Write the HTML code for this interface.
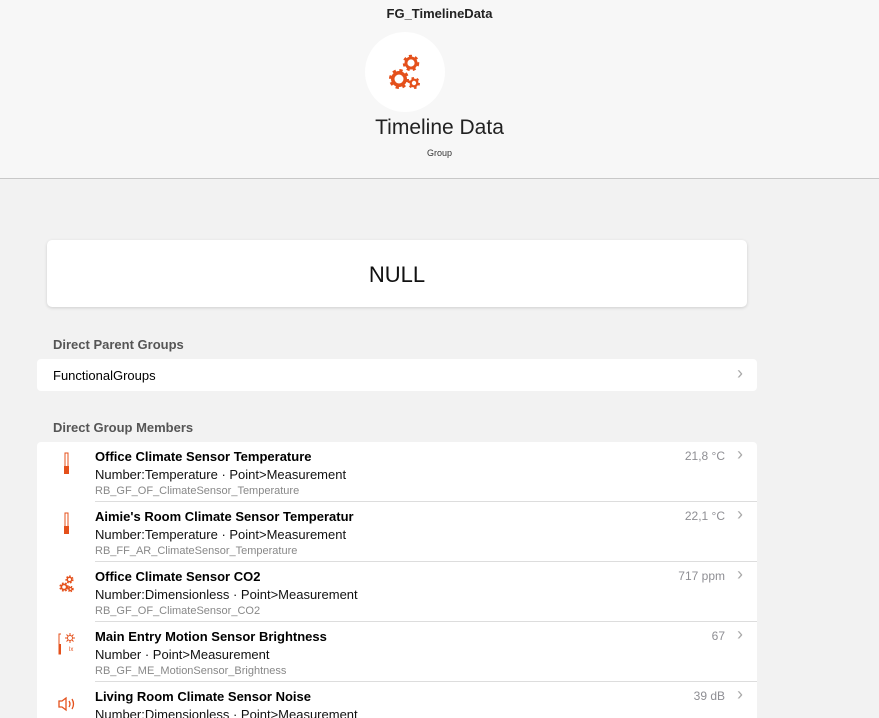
<!DOCTYPE html><html><head><style>
html,body{margin:0;width:879px;height:718px;overflow:hidden}
body{background:#f2f2f2;font-family:"Liberation Sans",sans-serif;color:#000;position:relative}
.hdr{height:178px;background:#f7f7f7;border-bottom:1px solid #c8c8c8;position:relative;text-align:center}
.t1{position:absolute;top:6px;left:0;right:0;font-size:13px;font-weight:bold;color:#222}
.circ{position:absolute;left:365px;top:32px;width:80px;height:80px;border-radius:50%;background:#fff}
.t2{position:absolute;top:116px;left:0;right:0;font-size:21px;color:#222}
.t3{position:absolute;top:148px;left:0;right:0;font-size:9px;color:#333}
.card{position:absolute;left:47px;top:240px;width:700px;height:67px;background:#fff;border-radius:5px;box-shadow:0 1px 3px rgba(0,0,0,.15);text-align:center;line-height:70px;font-size:22px;color:#111}
.sec{position:absolute;left:53px;font-size:13px;font-weight:bold;color:#555}
.list{position:absolute;left:37px;width:720px;background:#fff;border-radius:4px}
.row{position:relative;height:60px}
.row .ic{position:absolute;left:20px;top:10px}
.row .tx{position:absolute;left:58px;right:0;top:0;height:59px;border-bottom:1px solid #ddd}
.a{position:absolute;top:7px;font-size:13px;font-weight:bold}
.b{position:absolute;top:25px;font-size:13px;color:#111}
.c{position:absolute;top:43px;font-size:11px;color:#888}
.v{position:absolute;right:32px;top:7px;font-size:12px;color:#8e8e93}
.ch{position:absolute;right:14px;top:2px;font-size:18px;color:#aaa}
</style></head><body>
<div class="hdr"><div class="t1">FG_TimelineData</div><div class="circ">
<svg width="80" height="80" viewBox="0 0 80 80">
<g fill="#e4501b" stroke="#e4501b">
<circle cx="34" cy="47" r="8" stroke-width="4" stroke-dasharray="3 3.3"/>
<circle cx="46" cy="31" r="6.5" stroke-width="3.5" stroke-dasharray="2.8 2.9"/>
<circle cx="49" cy="51" r="4.5" stroke-width="3" stroke-dasharray="2.2 2.5"/>
</g>
<g fill="#fff"><circle cx="34" cy="47" r="4.5"/><circle cx="46" cy="31" r="3.6"/><circle cx="49" cy="51" r="2.2"/></g></svg></div>
<div class="t2">Timeline Data</div><div class="t3">Group</div></div>
<div class="card">NULL</div>
<div class="sec" style="top:337px">Direct Parent Groups</div>
<div class="list" style="top:359px;height:32px"><div style="position:absolute;left:16px;top:9px;font-size:13px">FunctionalGroups</div><div class="ch" style="top:4px">›</div></div>
<div class="sec" style="top:420px">Direct Group Members</div>
<div class="list" style="top:442px;height:300px">
<div class="row"><div class="ic"><svg width="20" height="24"><rect x="8" y="1" width="3" height="14" fill="none" stroke="#e4501b"/><rect x="7" y="14" width="5" height="8" fill="#e4501b"/></svg></div><div class="tx"><div class="a">Office Climate Sensor Temperature</div><div class="b">Number:Temperature · Point&gt;Measurement</div><div class="c">RB_GF_OF_ClimateSensor_Temperature</div><div class="v">21,8 °C</div><div class="ch">›</div></div></div>
<div class="row"><div class="ic"><svg width="20" height="24"><rect x="8" y="1" width="3" height="14" fill="none" stroke="#e4501b"/><rect x="7" y="14" width="5" height="8" fill="#e4501b"/></svg></div><div class="tx"><div class="a">Aimie's Room Climate Sensor Temperatur</div><div class="b">Number:Temperature · Point&gt;Measurement</div><div class="c">RB_FF_AR_ClimateSensor_Temperature</div><div class="v">22,1 °C</div><div class="ch">›</div></div></div>
<div class="row"><div class="ic"><svg width="22" height="24" viewBox="0 0 22 24"><g fill="#e4501b" stroke="#e4501b"><circle cx="7" cy="15" r="3.5" stroke-width="2.4" stroke-dasharray="1.5 1.4"/><circle cx="12.5" cy="7.5" r="3" stroke-width="2.2" stroke-dasharray="1.4 1.3"/><circle cx="13.5" cy="17" r="2.2" stroke-width="2" stroke-dasharray="1.1 1"/></g><g fill="#fff"><circle cx="7" cy="15" r="1.8"/><circle cx="12.5" cy="7.5" r="1.5"/><circle cx="13.5" cy="17" r="0.9"/></g></svg></div><div class="tx"><div class="a">Office Climate Sensor CO2</div><div class="b">Number:Dimensionless · Point&gt;Measurement</div><div class="c">RB_GF_OF_ClimateSensor_CO2</div><div class="v">717 ppm</div><div class="ch">›</div></div></div>
<div class="row"><div class="ic"><svg width="22" height="24"><path d="M4 2h-2v20h2" fill="none" stroke="#e4501b"/><rect x="2" y="12" width="2" height="10" fill="#e4501b"/><circle cx="13" cy="6" r="2.5" fill="none" stroke="#e4501b"/><path d="M13 1v2M13 9v2M8 6h2M16 6h2M9.5 2.5l1.5 1.5M15 8l1.5 1.5M16.5 2.5L15 4M11 8L9.5 9.5" stroke="#e4501b"/><text x="12" y="19" font-size="6" fill="#e4501b">lx</text></svg></div><div class="tx"><div class="a">Main Entry Motion Sensor Brightness</div><div class="b">Number · Point&gt;Measurement</div><div class="c">RB_GF_ME_MotionSensor_Brightness</div><div class="v">67</div><div class="ch">›</div></div></div>
<div class="row"><div class="ic"><svg width="22" height="24"><path d="M2 9h3l4-3v12l-4-3H2z" fill="none" stroke="#e4501b" stroke-width="1.3"/><path d="M12 9q2 3 0 6M15 7q3 5 0 10" fill="none" stroke="#e4501b" stroke-width="1.3"/></svg></div><div class="tx"><div class="a">Living Room Climate Sensor Noise</div><div class="b">Number:Dimensionless · Point&gt;Measurement</div><div class="v">39 dB</div><div class="ch">›</div></div></div>
</div>
</body></html>
